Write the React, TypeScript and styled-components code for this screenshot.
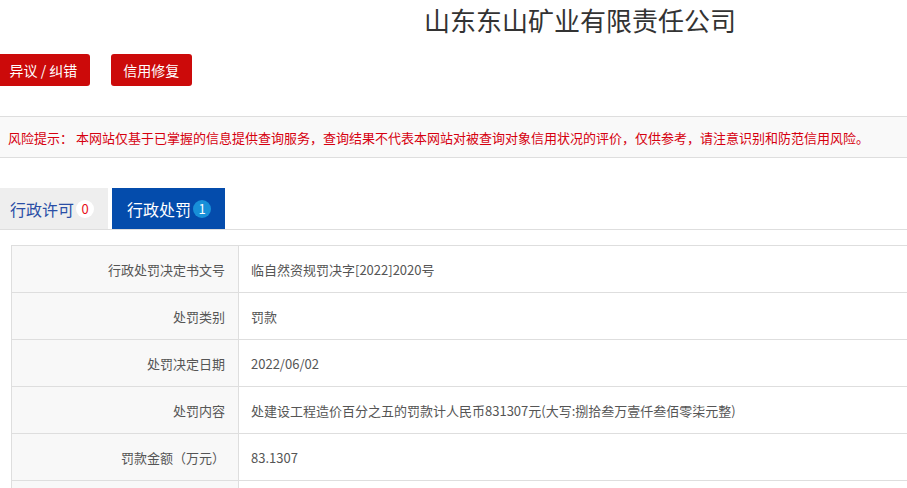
import React from 'react'
import styled, { createGlobalStyle } from 'styled-components'

const GlobalStyle = createGlobalStyle`
  html, body {
    margin: 0;
    padding: 0;
    background: #fff;
    overflow: hidden;
  }
  body {
    font-family: "Noto Sans CJK SC", "Noto Sans", sans-serif;
    color: #333;
  }
`

const Page = styled.div`
  width: 907px;
  height: 488px;
  overflow: hidden;
`

const Title = styled.h1`
  margin: 0;
  padding: 3px 0 0 424px;
  height: 44px;
  font-size: 26px;
  font-weight: 400;
  line-height: 34px;
  color: #333;
  white-space: nowrap;
`

const Actions = styled.div`
  display: flex;
  gap: 21px;
  margin: 7px 0 0 -3px;
`

const RedButton = styled.button`
  height: 32px;
  padding: 0 12.5px;
  border: none;
  border-radius: 3px;
  background: #cc0a0a;
  color: #fff;
  font-family: inherit;
  font-size: 14px;
  line-height: 32px;
  white-space: nowrap;
  cursor: pointer;
`

const RiskBar = styled.div`
  margin-top: 30px;
  height: 40px;
  border-top: 1px solid #dedede;
  border-bottom: 1px solid #dedede;
  background: #f9f9f9;
  padding-left: 8px;
  display: flex;
  align-items: center;
  font-size: 13px;
  color: #d6000f;
  white-space: nowrap;
`

const TabBar = styled.div`
  margin-top: 30px;
  display: flex;
  gap: 4px;
  height: 41px;
  border-bottom: 1px solid #dedede;
`

const Tab = styled.div<{ $active?: boolean }>`
  display: flex;
  align-items: center;
  gap: 2px;
  height: 41px;
  padding: ${({ $active }) => ($active ? '0 14px 0 15px' : '0 14px 0 10px')};
  background: ${({ $active }) => ($active ? '#044cac' : '#eeeeee')};
  color: ${({ $active }) => ($active ? '#fff' : '#2a4ea6')};
  font-size: 16px;
  white-space: nowrap;
`

const Badge = styled.span<{ $active?: boolean }>`
  display: inline-flex;
  align-items: center;
  justify-content: center;
  width: 18px;
  height: 18px;
  border-radius: 50%;
  background: ${({ $active }) => ($active ? '#1890d8' : '#fff')};
  color: ${({ $active }) => ($active ? '#fff' : '#e8101a')};
  font-size: 13px;
  line-height: 18px;
`

const Table = styled.div`
  margin: 15px 0 0 11px;
  width: 920px;
  border-top: 1px solid #dedede;
  border-left: 1px solid #dedede;
`

const Row = styled.div`
  display: grid;
  grid-template-columns: 227px 1fr;
  height: 46px;
  border-bottom: 1px solid #dedede;
`

const Label = styled.div`
  display: flex;
  align-items: center;
  justify-content: flex-end;
  padding-right: 13px;
  background: #f8f8f8;
  border-right: 1px solid #dedede;
  font-size: 13px;
  color: #555;
  white-space: nowrap;
`

const Value = styled.div`
  display: flex;
  align-items: center;
  padding-left: 12px;
  font-size: 13px;
  color: #555;
  white-space: nowrap;
`

const rows: [string, string][] = [
  ['行政处罚决定书文号', '临自然资规罚决字[2022]2020号'],
  ['处罚类别', '罚款'],
  ['处罚决定日期', '2022/06/02'],
  ['处罚内容', '处建设工程造价百分之五的罚款计人民币831307元(大写:捌拾叁万壹仟叁佰零柒元整)'],
  ['罚款金额（万元）', '83.1307'],
  ['', ''],
]

export default function App() {
  return (
    <Page>
      <GlobalStyle />
      <Title>山东东山矿业有限责任公司</Title>
      <Actions>
        <RedButton>异议 / 纠错</RedButton>
        <RedButton>信用修复</RedButton>
      </Actions>
      <RiskBar>风险提示： 本网站仅基于已掌握的信息提供查询服务，查询结果不代表本网站对被查询对象信用状况的评价，仅供参考，请注意识别和防范信用风险。</RiskBar>
      <TabBar>
        <Tab>
          行政许可<Badge>0</Badge>
        </Tab>
        <Tab $active>
          行政处罚<Badge $active>1</Badge>
        </Tab>
      </TabBar>
      <Table>
        {rows.map(([k, v], i) => (
          <Row key={i}>
            <Label>{k}</Label>
            <Value>{v}</Value>
          </Row>
        ))}
      </Table>
    </Page>
  )
}
